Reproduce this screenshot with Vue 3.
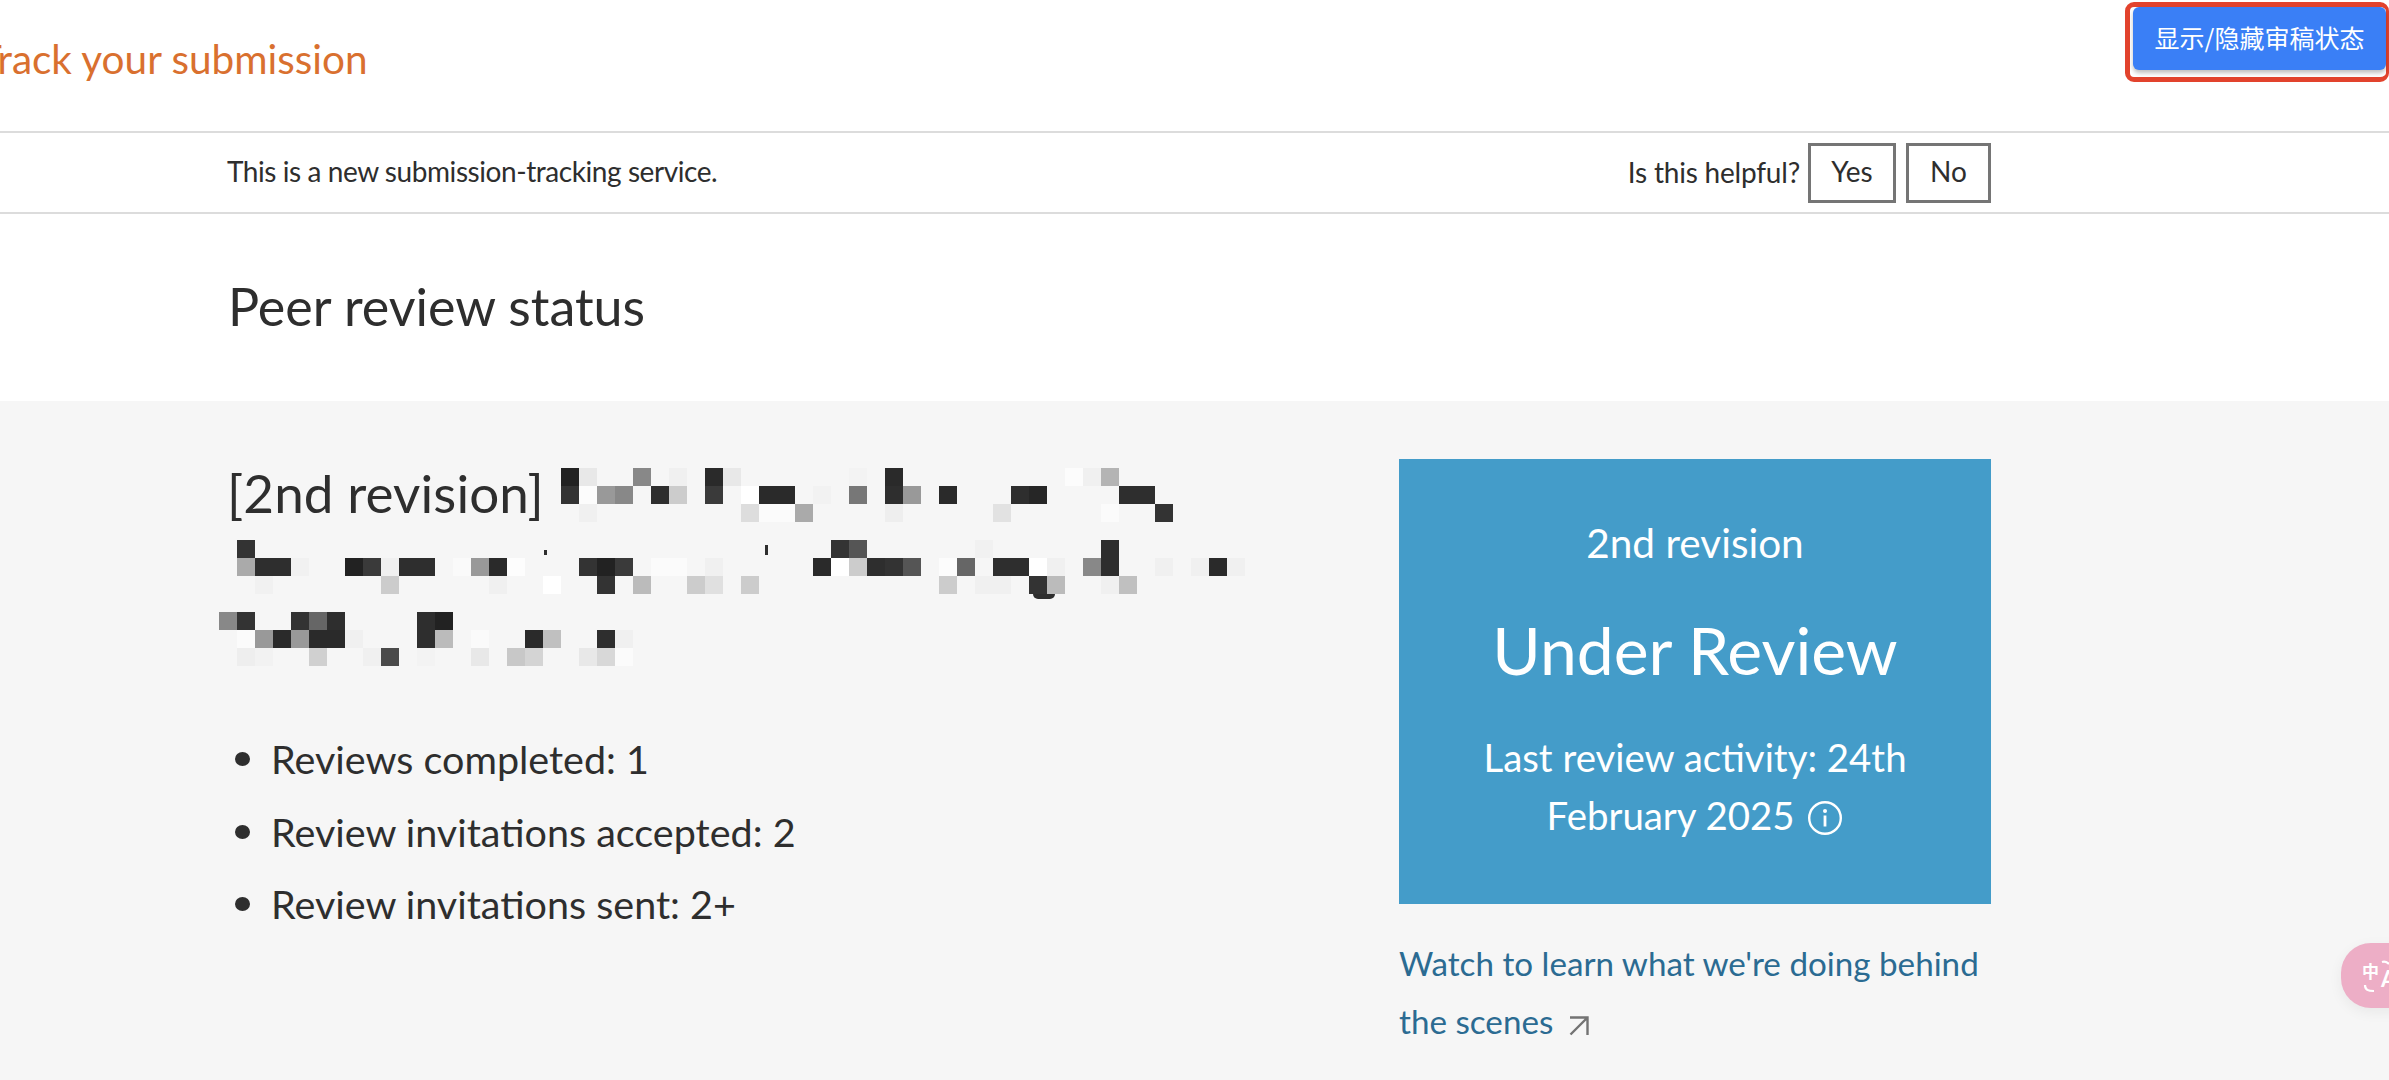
<script setup>
const cells = [
[0,19,'#222'],[0,20,'#e8e8e8'],[0,23,'#888'],[0,25,'#f0f0f0'],[0,27,'#2a2a2a'],[0,28,'#e8e8e8'],[0,35,'#f3f3f3'],[0,37,'#2a2a2a'],[0,47,'#fcfcfc'],[0,48,'#f0f0f0'],[0,49,'#b4b4b4'],
[1,19,'#333'],[1,20,'#fcfcfc'],[1,21,'#999'],[1,22,'#888'],[1,24,'#2e2e2e'],[1,25,'#ccc'],[1,27,'#3a3a3a'],[1,29,'#fff'],[1,30,'#2a2a2a'],[1,31,'#2a2a2a'],[1,33,'#f2f2f2'],[1,35,'#777'],[1,37,'#2e2e2e'],[1,38,'#999'],[1,40,'#2a2a2a'],[1,44,'#2e2e2e'],[1,45,'#262626'],[1,50,'#2e2e2e'],[1,51,'#2e2e2e'],
[2,20,'#f0f0f0'],[2,29,'#ddd'],[2,30,'#fbfbfb'],[2,31,'#fbfbfb'],[2,32,'#aaa'],[2,37,'#eee'],[2,43,'#e2e2e2'],[2,49,'#fbfbfb'],[2,52,'#333'],
[4,1,'#333'],[4,34,'#333'],[4,35,'#555'],[4,42,'#f1f1f1'],[4,49,'#2e2e2e'],
[5,1,'#aaa'],[5,2,'#2e2e2e'],[5,3,'#2e2e2e'],[5,4,'#f1f1f1'],[5,7,'#222'],[5,8,'#3a3a3a'],[5,9,'#f0f0f0'],[5,10,'#2e2e2e'],[5,11,'#2e2e2e'],[5,13,'#fafafa'],[5,14,'#999'],[5,15,'#2a2a2a'],[5,16,'#fdfdfd'],[5,20,'#333'],[5,21,'#222'],[5,22,'#3a3a3a'],[5,24,'#fbfbfb'],[5,25,'#fbfbfb'],[5,27,'#f0f0f0'],[5,33,'#2a2a2a'],[5,34,'#fff'],[5,35,'#ccc'],[5,36,'#2e2e2e'],[5,37,'#333'],[5,38,'#555'],[5,40,'#fcfcfc'],[5,41,'#666'],[5,43,'#2e2e2e'],[5,44,'#2e2e2e'],[5,45,'#fff'],[5,46,'#f0f0f0'],[5,48,'#888'],[5,49,'#2e2e2e'],[5,52,'#f0f0f0'],[5,54,'#f0f0f0'],[5,55,'#2a2a2a'],[5,56,'#f0f0f0'],
[6,2,'#f1f1f1'],[6,9,'#ccc'],[6,15,'#f0f0f0'],[6,18,'#fff'],[6,21,'#333'],[6,23,'#bbb'],[6,26,'#ccc'],[6,27,'#e0e0e0'],[6,29,'#ccc'],[6,40,'#ccc'],[6,42,'#f0f0f0'],[6,43,'#f0f0f0'],[6,45,'#333'],[6,46,'#bbb'],[6,49,'#f0f0f0'],[6,50,'#c0c0c0'],
[8,0,'#888'],[8,1,'#333'],[8,4,'#333'],[8,5,'#666'],[8,6,'#2e2e2e'],[8,11,'#2e2e2e'],[8,12,'#222'],
[9,1,'#fbfbfb'],[9,2,'#999'],[9,3,'#2a2a2a'],[9,4,'#999'],[9,5,'#2a2a2a'],[9,6,'#2a2a2a'],[9,7,'#f0f0f0'],[9,11,'#2e2e2e'],[9,12,'#bbb'],[9,14,'#fafafa'],[9,17,'#2a2a2a'],[9,18,'#c0c0c0'],[9,21,'#2e2e2e'],[9,22,'#f0f0f0'],
[10,1,'#eee'],[10,2,'#f2f2f2'],[10,5,'#d0d0d0'],[10,8,'#f0f0f0'],[10,9,'#4a4a4a'],[10,11,'#f3f3f3'],[10,14,'#e8e8e8'],[10,16,'#c8c8c8'],[10,17,'#d4d4d4'],[10,20,'#e8e8e8'],[10,21,'#d8d8d8'],[10,22,'#fbfbfb'],
]
const cellStyle = (c) => ({ gridRow: c[0] + 1, gridColumn: c[1] + 1, background: c[2] })
const items = ['Reviews completed: 1', 'Review invitations accepted: 2', 'Review invitations sent: 2+']
</script>

<template>
  <div class="page">
    <header class="top">
      <a class="brand">Track your submission</a>
      <div class="mark"><button class="toggle">显示/隐藏审稿状态</button></div>
    </header>
    <div class="notice">
      <span class="note">This is a new submission-tracking service.</span>
      <div class="helpful">
        <span class="ask">Is this helpful?</span>
        <button class="fb yes">Yes</button>
        <button class="fb no">No</button>
      </div>
    </div>
    <h1 class="heading">Peer review status</h1>
    <section class="panel">
      <div class="left">
        <div class="title">
          <h2>[2nd revision]</h2>
          <div class="mosaic">
            <i v-for="(c, i) in cells" :key="i" :style="cellStyle(c)"></i>
            <b class="speck dot"></b>
            <b class="speck tick"></b>
            <b class="speck tail"></b>
          </div>
        </div>
        <ul class="stats">
          <li v-for="t in items" :key="t">{{ t }}</li>
        </ul>
      </div>
      <div class="right">
        <div class="status">
          <div class="rev">2nd revision</div>
          <div class="state">Under Review</div>
          <div class="last">Last review activity: 24th<br />February 2025
            <svg class="info" viewBox="0 0 36 36" width="36" height="36" aria-hidden="true">
              <circle cx="18" cy="18" r="15.8" fill="none" stroke="#fff" stroke-width="2.4" />
              <circle cx="18" cy="11" r="2" fill="#fff" />
              <path d="M18 15.5v11" stroke="#fff" stroke-width="2.8" fill="none" />
            </svg>
          </div>
        </div>
        <a class="watch">Watch to learn what we're doing behind<br />the scenes
          <svg class="arrow" viewBox="0 0 22 22" width="22" height="22" aria-hidden="true">
            <path d="M2 2.5h17.5V20M19.5 2.5L2.5 19.5" fill="none" stroke="#737373" stroke-width="2.4" />
          </svg>
        </a>
      </div>
    </section>
    <div class="translate">
      <svg viewBox="0 0 48 65" width="48" height="65" aria-hidden="true">
        <text x="21" y="35" class="zh">中</text>
        <text x="40" y="44" class="en">A</text>
        <path d="M41 19c3-1 5 0 7 2M24 42c0 5 3 6 9 6" fill="none" stroke="#fff" stroke-width="2.2" />
      </svg>
    </div>
  </div>
</template>

<style>
html, body { margin: 0; background: #fff; overflow: hidden; }
</style>

<style scoped>
.page {
  position: relative;
  width: 2389px;
  height: 1080px;
  overflow: hidden;
  font-family: Lato, "Noto Sans", sans-serif;
  color: #2e2e2e;
  background: #fff;
}
.top {
  height: 131px;
  display: flex;
  justify-content: space-between;
  align-items: flex-start;
  border-bottom: 2px solid #dcdcdc;
}
.brand {
  margin: 33px 0 0 -22px;
  font-size: 40.5px;
  line-height: 52px;
  color: #d9702f;
}
.mark {
  margin-top: 2px;
  width: 264px;
  height: 80px;
  box-sizing: border-box;
  border: 5px solid #e2432d;
  border-right-width: 3px;
  border-radius: 9px;
  padding: 0 0 0 3px;
}
.toggle {
  display: block;
  width: 253px;
  height: 63px;
  border: 0;
  border-radius: 6px;
  background: #3a7ff6;
  box-shadow: 0 3px 4px rgba(0, 0, 0, 0.25);
  color: #fff;
  font: 25px "Noto Sans CJK SC", sans-serif;
  padding: 0 0 4px;
}
.notice {
  height: 79px;
  display: flex;
  justify-content: space-between;
  align-items: center;
  padding: 0 398px 0 227px;
  border-bottom: 2px solid #dcdcdc;
  font-size: 28px;
}
.note { letter-spacing: -0.43px; margin-bottom: 4px; }
.ask { letter-spacing: -0.2px; margin-bottom: 2px; }
.helpful { display: flex; align-items: center; }
.fb {
  height: 60px;
  box-sizing: border-box;
  border: 3px solid #757575;
  background: #fff;
  color: #2e2e2e;
  font: 28px Lato, sans-serif;
  padding: 0 0 3px;
}
.yes { width: 88px; margin-left: 8px; }
.no { width: 85px; margin-left: 10px; }
.heading {
  margin: 0;
  height: 187px;
  box-sizing: border-box;
  padding: 57px 0 0 228px;
  font-weight: 400;
  font-size: 52px;
  line-height: 70px;
}
.panel {
  height: 679px;
  background: #f6f6f6;
  display: flex;
  padding: 58px 0 0 228px;
  box-sizing: border-box;
}
.left { width: 1171px; }
.title { position: relative; height: 240px; }
.title h2 {
  margin: 0 0 0 -1px;
  font-weight: 400;
  font-size: 53px;
  line-height: 68px;
  letter-spacing: 0.1px;
}
.mosaic {
  position: absolute;
  left: -9px;
  top: 9px;
  display: grid;
  grid-template-columns: repeat(57, 18px);
  grid-template-rows: repeat(11, 18px);
}
.speck { position: absolute; background: #2e2e2e; }
.dot { left: 325px; top: 82px; width: 3px; height: 5px; }
.tick { left: 546px; top: 77px; width: 3px; height: 10px; }
.tail { left: 814px; top: 126px; width: 22px; height: 5px; border-radius: 0 0 12px 12px; }
.stats {
  list-style: none;
  margin: 24px 0 0;
  padding: 0 0 0 43px;
  font-size: 39.5px;
  line-height: 72.5px;
}
.stats li { position: relative; }
.stats li::before {
  content: "";
  position: absolute;
  left: -36px;
  top: 29px;
  width: 15px;
  height: 14px;
  border-radius: 50%;
  background: #2e2e2e;
}
.right { width: 592px; }
.status {
  height: 445px;
  background: #449cc9;
  color: #fff;
  text-align: center;
  box-sizing: border-box;
  padding-top: 58px;
}
.rev { font-size: 40.5px; line-height: 52px; }
.state { font-size: 66px; line-height: 80px; margin-top: 41px; }
.last { font-size: 38.4px; line-height: 58px; margin-top: 38px; }
.info { vertical-align: -6px; margin-left: 3px; }
.watch {
  display: block;
  margin-top: 30px;
  font-size: 33.2px;
  line-height: 58px;
  color: #2b6b92;
  white-space: nowrap;
}
.arrow { vertical-align: -3px; margin-left: 6px; }
.translate {
  position: absolute;
  left: 2341px;
  top: 943px;
  width: 90px;
  height: 65px;
  border-radius: 30px;
  background: #edaec6;
  box-shadow: 0 4px 14px rgba(0, 0, 0, 0.06);
}
.zh { fill: #fff; font: 700 17px "Noto Sans CJK SC", sans-serif; }
.en { fill: #fff; font: 700 22px Lato, sans-serif; }
</style>
